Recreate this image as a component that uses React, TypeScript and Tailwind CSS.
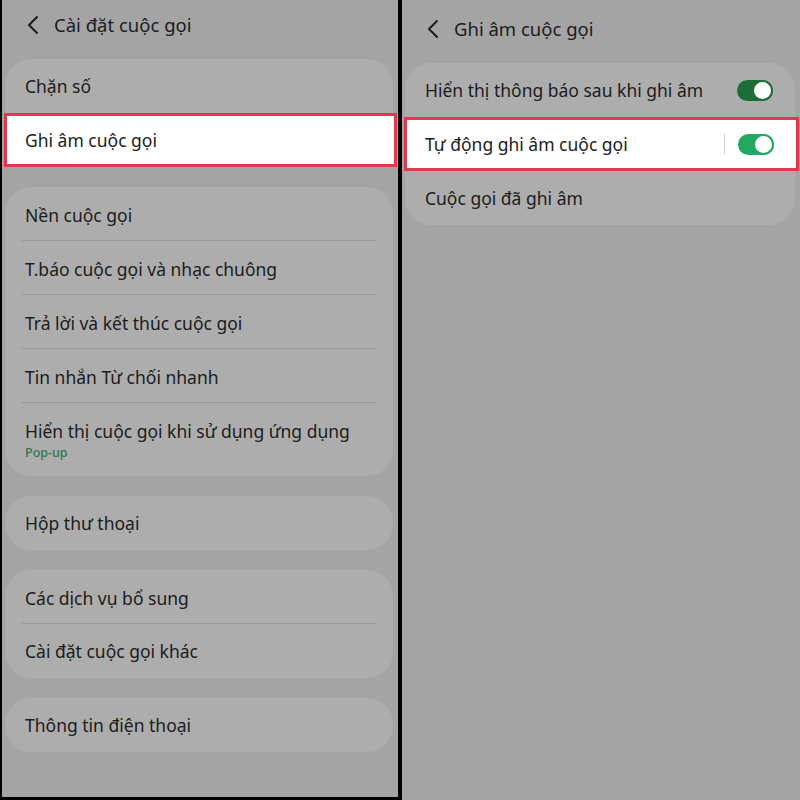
import { ReactNode } from 'react';

const font = { fontFamily: '"Noto Sans", "Open Sans", sans-serif' };

function BackChevron() {
  return (
    <svg width="14" height="20" viewBox="0 0 14 20" className="shrink-0">
      <path d="M11 2 L3 10 L11 18" fill="none" stroke="#1c1c1c" strokeWidth="2" strokeLinecap="round" strokeLinejoin="round" />
    </svg>
  );
}

function Header({ title }: { title: string }) {
  return (
    <div className="h-[50px] flex items-center pl-[24px] gap-[14px]">
      <BackChevron />
      <span className="text-[18.5px] text-[#1c1c1c]">{title}</span>
    </div>
  );
}

function Card({ children }: { children: ReactNode }) {
  return <div className="ml-[3px] mr-[5px] rounded-[26px] bg-[#adadad] flex flex-col">{children}</div>;
}

function Row({ label, sub, divider, right }: { label: string; sub?: string; divider?: boolean; right?: ReactNode }) {
  const h = sub ? 'h-[73px] pt-[2px]' : divider ? 'h-[53px] pt-[2px]' : 'h-[54px]';
  return (
    <div>
      <div className={`flex items-center pl-[20px] pr-[22px] ${h}`}>
        <div className="flex-1 flex flex-col">
          <span className="text-[17.5px] leading-[24px] text-[#1c1c1c]">{label}</span>
          {sub && <span className="text-[12.5px] leading-[20px] font-medium text-[#2c7a4c]">{sub}</span>}
        </div>
        {right}
      </div>
      {divider && <div className="mx-[17px] h-px bg-[#999999]" />}
    </div>
  );
}

function Highlight({ label, right }: { label: string; right?: ReactNode }) {
  return (
    <div className="h-[54px] -ml-[1px] -mr-[4px] border-[3px] border-[#e0384e] bg-white flex items-center pl-[18px] pr-[22px]">
      <span className="flex-1 text-[17.5px] leading-[24px] text-[#1c1c1c]">{label}</span>
      {right}
    </div>
  );
}

function Toggle({ dark }: { dark?: boolean }) {
  const track = dark ? 'bg-[#1d6e36]' : 'bg-[#22a862]';
  const ring = dark ? 'border-[#1d6e36]' : 'border-[#22a862]';
  return (
    <div className={`relative w-[36px] h-[21px] rounded-full ${track}`}>
      <div className={`absolute right-0 top-0 w-[21px] h-[21px] rounded-full bg-white border-2 ${ring}`} />
    </div>
  );
}

export default function App() {
  return (
    <div className="w-[800px] h-[800px] flex bg-black" style={font}>
      <div className="w-[396px] ml-[2px] mb-[3px] bg-[#a4a4a4] flex flex-col">
        <Header title="Cài đặt cuộc gọi" />
        <div className="mt-[9px] flex flex-col gap-[20px]">
          <Card>
            <Row label="Chặn số" />
            <Highlight label="Ghi âm cuộc gọi" />
          </Card>
          <Card>
            <Row label="Nền cuộc gọi" divider />
            <Row label="T.báo cuộc gọi và nhạc chuông" divider />
            <Row label="Trả lời và kết thúc cuộc gọi" divider />
            <Row label="Tin nhắn Từ chối nhanh" divider />
            <Row label="Hiển thị cuộc gọi khi sử dụng ứng dụng" sub="Pop-up" />
          </Card>
          <Card>
            <Row label="Hộp thư thoại" />
          </Card>
          <Card>
            <Row label="Các dịch vụ bổ sung" divider />
            <Row label="Cài đặt cuộc gọi khác" />
          </Card>
          <Card>
            <Row label="Thông tin điện thoại" />
          </Card>
        </div>
      </div>
      <div className="w-[4px]" />
      <div className="flex-1 bg-[#a4a4a4] flex flex-col pt-[4px]">
        <Header title="Ghi âm cuộc gọi" />
        <div className="mt-[9px] flex flex-col">
          <Card>
            <Row label="Hiển thị thông báo sau khi ghi âm" right={<Toggle dark />} />
            <Highlight
              label="Tự động ghi âm cuộc gọi"
              right={
                <div className="flex items-center gap-[13px]">
                  <div className="w-px h-[20px] bg-[#cfcfcf]" />
                  <Toggle />
                </div>
              }
            />
            <Row label="Cuộc gọi đã ghi âm" />
          </Card>
        </div>
      </div>
    </div>
  );
}
